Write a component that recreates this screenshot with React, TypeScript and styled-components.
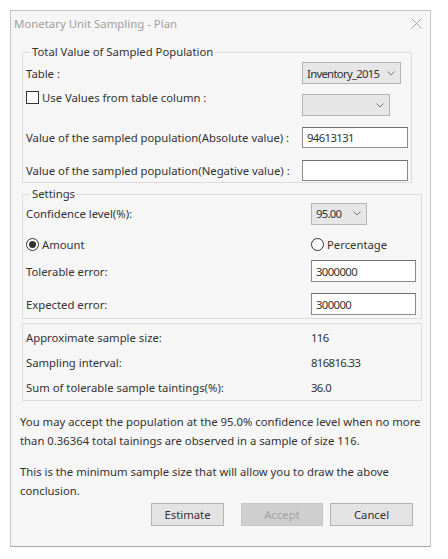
import styled, { createGlobalStyle } from "styled-components"

const GlobalStyle = createGlobalStyle`
  html, body {
    margin: 0;
    padding: 0;
    background: #ffffff;
  }
  body {
    font-family: "Noto Sans", "Open Sans", sans-serif;
    font-size: 11.3px;
    color: #333333;
  }
`

const Page = styled.div`
  padding: 10px;
`

const Dialog = styled.div`
  width: 421px;
  height: 537px;
  box-sizing: border-box;
  border: 1px solid #c4c4c4;
  border-bottom-color: #a8a8a8;
  background: #f6f6f6;
  display: flex;
  flex-direction: column;
`

const TitleBar = styled.div`
  height: 25px;
  display: flex;
  align-items: center;
  justify-content: space-between;
  padding: 0 8px 0 3px;
  color: #a0a0a0;
  font-size: 11.4px;
`

const Body = styled.div`
  display: flex;
  flex-direction: column;
  padding: 8px 0 0 11px;
`

const Group = styled.fieldset<{ $width: number; $top?: number; $bottom?: number }>`
  width: ${p => p.$width}px;
  box-sizing: border-box;
  margin: ${p => p.$top ?? 0}px 0 0 0;
  padding: 0 ${p => (p.$width > 395 ? 5 : 3)}px ${p => p.$bottom ?? 0}px 3px;
  border: 1px solid #dcdcdc;
  min-width: 0;
`

const Legend = styled.legend`
  padding: 0 2px;
  margin-left: 4px;
  line-height: 16px;
`

const Panel = styled.div`
  width: 400px;
  box-sizing: border-box;
  margin-top: 4px;
  padding: 1px 5px 0 3px;
  border: 1px solid #dcdcdc;
`

const Row = styled.div<{ $h: number; $gap?: number; $col: number; $align?: string }>`
  display: grid;
  grid-template-columns: minmax(0, 1fr) ${p => p.$col}px;
  align-items: ${p => p.$align ?? "center"};
  height: ${p => p.$h}px;
  margin-top: ${p => p.$gap ?? 0}px;
`

const Label = styled.span<{ $top?: number }>`
  display: flex;
  align-items: center;
  gap: 3px;
  white-space: nowrap;
  align-self: ${p => (p.$top !== undefined ? "start" : "auto")};
  margin-top: ${p => p.$top ?? 0}px;
`

const Combo = styled.div<{ $w: number }>`
  width: ${p => p.$w}px;
  height: 22px;
  box-sizing: border-box;
  border: 1px solid #b4b4b4;
  background: #e6e6e6;
  display: flex;
  align-items: center;
  justify-content: space-between;
  padding: 0 5px 0 4px;
  letter-spacing: -0.7px;
`

const TextBox = styled.div<{ $h?: number }>`
  height: ${p => p.$h ?? 22}px;
  box-sizing: border-box;
  border: 1px solid #8a8a8a;
  border-top-color: #6f6f6f;
  background: #fff;
  display: flex;
  align-items: center;
  padding: 0 4px;
  letter-spacing: -0.6px;
`

const CheckBox = styled.span`
  width: 13px;
  height: 13px;
  box-sizing: border-box;
  border: 1px solid #333;
  background: #fff;
`

const Radio = styled.span<{ $on?: boolean }>`
  width: 13px;
  height: 13px;
  box-sizing: border-box;
  border: 1px solid #333;
  border-radius: 50%;
  background: #fff;
  display: flex;
  align-items: center;
  justify-content: center;
  &::after {
    content: "";
    width: 7px;
    height: 7px;
    border-radius: 50%;
    background: ${p => (p.$on ? "#333" : "transparent")};
  }
`

const Value = styled.span`
  letter-spacing: -0.6px;
`

const Paragraph = styled.p<{ $top: number }>`
  margin: ${p => p.$top}px 0 0 -2px;
  line-height: 19px;
  width: 404px;
`

const ButtonBar = styled.div`
  display: flex;
  justify-content: flex-end;
  gap: 7px;
  margin-top: 3px;
  padding-right: 17px;
`

const Button = styled.div<{ $w: number; $disabled?: boolean; $gapLeft?: number }>`
  width: ${p => p.$w}px;
  height: 23px;
  box-sizing: border-box;
  margin-left: ${p => p.$gapLeft ?? 0}px;
  border: 1px solid ${p => (p.$disabled ? "#c6c6c6" : "#b3b3b3")};
  background: ${p => (p.$disabled ? "#cfcfcf" : "#e3e3e3")};
  color: ${p => (p.$disabled ? "#a2a2a2" : "#333")};
  display: flex;
  align-items: center;
  justify-content: center;
`

function Chevron() {
  return (
    <svg width="8" height="5" viewBox="0 0 8 5">
      <path d="M0.5 0.5 L4 4 L7.5 0.5" fill="none" stroke="#777" strokeWidth="1" />
    </svg>
  )
}

function CloseIcon() {
  return (
    <svg width="11" height="11" viewBox="0 0 11 11">
      <path d="M0.5 0.5 L10.5 10.5 M10.5 0.5 L0.5 10.5" stroke="#a8a8a8" strokeWidth="1" />
    </svg>
  )
}

export default function App() {
  return (
    <Page>
      <GlobalStyle />
      <Dialog>
        <TitleBar>
          <span>Monetary Unit Sampling - Plan</span>
          <CloseIcon />
        </TitleBar>
        <Body>
          <Group $width={390}>
            <Legend>Total Value of Sampled Population</Legend>
            <Row $h={24} $col={106} $gap={1}>
              <Label>Table :</Label>
              <Combo $w={99}>
                <span>Inventory_2015</span>
                <Chevron />
              </Combo>
            </Row>
            <Row $h={30} $col={106} $gap={1} $align="end">
              <Label $top={4}>
                <CheckBox />
                Use Values from table column :
              </Label>
              <Combo $w={88}>
                <span />
                <Chevron />
              </Combo>
            </Row>
            <Row $h={24} $col={106} $gap={9}>
              <Label>Value of the sampled population(Absolute value) :</Label>
              <TextBox $h={21}>94613131</TextBox>
            </Row>
            <Row $h={24} $col={106} $gap={9}>
              <Label>Value of the sampled population(Negative value) :</Label>
              <TextBox $h={21} />
            </Row>
          </Group>

          <Group $width={400} $top={3} $bottom={2}>
            <Legend>Settings</Legend>
            <Row $h={23} $col={105}>
              <Label>Confidence level(%):</Label>
              <Combo $w={56}>
                <span>95.00</span>
                <Chevron />
              </Combo>
            </Row>
            <Row $h={22} $col={105} $gap={8}>
              <Label>
                <Radio $on />
                Amount
              </Label>
              <Label>
                <Radio />
                Percentage
              </Label>
            </Row>
            <Row $h={24} $col={105} $gap={4}>
              <Label>Tolerable error:</Label>
              <TextBox>3000000</TextBox>
            </Row>
            <Row $h={24} $col={105} $gap={9}>
              <Label>Expected error:</Label>
              <TextBox>300000</TextBox>
            </Row>
          </Group>

          <Panel>
            <Row $h={25} $col={105}>
              <Label>Approximate sample size:</Label>
              <Value>116</Value>
            </Row>
            <Row $h={25} $col={105}>
              <Label>Sampling interval:</Label>
              <Value>816816.33</Value>
            </Row>
            <Row $h={25} $col={105}>
              <Label>Sum of tolerable sample taintings(%):</Label>
              <Value>36.0</Value>
            </Row>
          </Panel>

          <Paragraph $top={11}>
            You may accept the population at the 95.0% confidence level when no more than 0.36364 total tainings are observed in a sample of size 116.
          </Paragraph>
          <Paragraph $top={12}>
            This is the minimum sample size that will allow you to draw the above conclusion.
          </Paragraph>

          <ButtonBar>
            <Button $w={73}>Estimate</Button>
            <Button $w={82} $disabled $gapLeft={10}>Accept</Button>
            <Button $w={83}>Cancel</Button>
          </ButtonBar>
        </Body>
      </Dialog>
    </Page>
  )
}
